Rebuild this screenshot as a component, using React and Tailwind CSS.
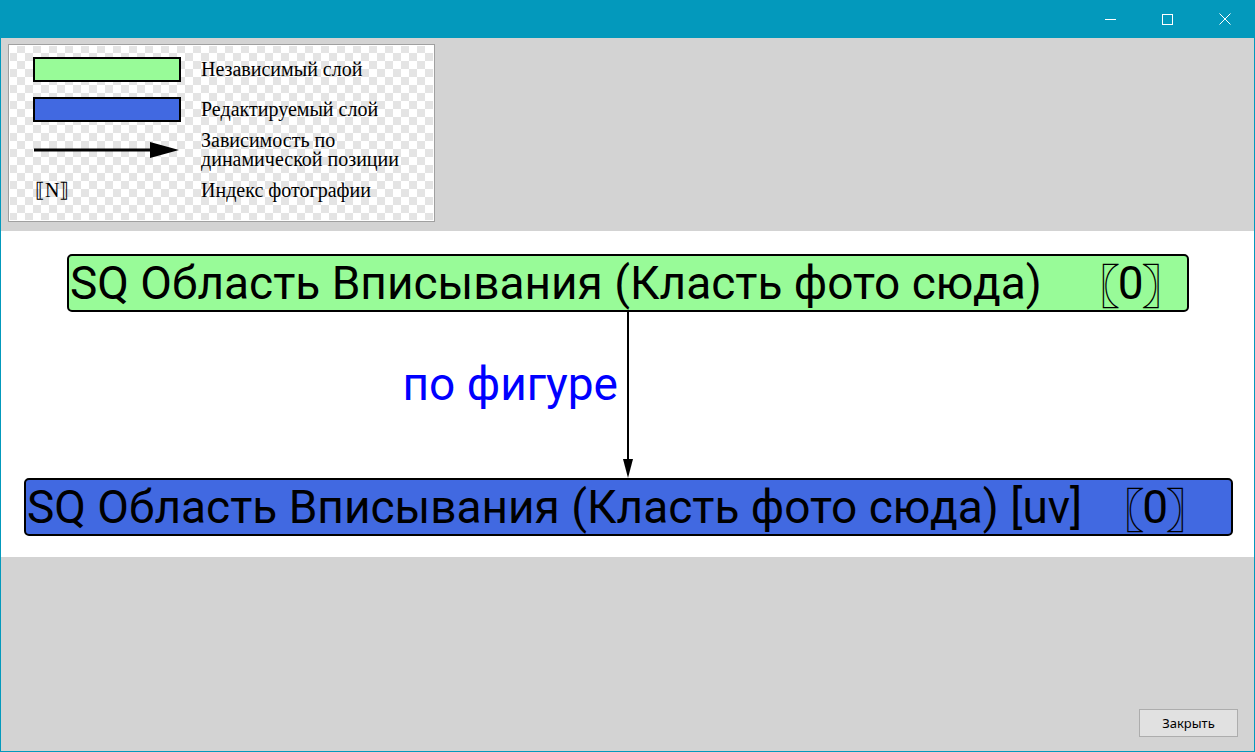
import React from "react";

function Idx({ gap }) {
  return (
    <span className={"inline-flex items-center " + gap}>
      <span className="font-['Noto_Sans_CJK_JP',sans-serif] font-black -mr-[24px] relative -left-[22px]">〖</span>
      <span>0</span>
      <span className="font-['Noto_Sans_CJK_JP',sans-serif] font-black -ml-[24px] relative left-[22px]">〗</span>
    </span>
  );
}

export default function App() {
  return (
    <div className="w-[1255px] h-[752px] bg-[#0399bc] flex flex-col overflow-hidden">
      {/* title bar */}
      <div className="h-[38px] flex items-center justify-end shrink-0 pr-[2px]">
        <div className="w-[57px] h-[38px] flex items-center justify-center">
          <div className="w-[11px] h-px bg-white" />
        </div>
        <div className="w-[57px] h-[38px] flex items-center justify-center">
          <div className="w-[11px] h-[11px] border border-white" />
        </div>
        <div className="w-[57px] h-[38px] flex items-center justify-center">
          <svg width="12" height="12" viewBox="0 0 12 12">
            <path d="M0.5 0.5 L11.5 11.5 M11.5 0.5 L0.5 11.5" stroke="white" strokeWidth="1" />
          </svg>
        </div>
      </div>
      {/* client */}
      <div className="flex-1 mx-px mb-px bg-[#d3d3d3] flex flex-col">
        {/* legend area */}
        <div className="h-[193px] pl-[7px] pt-[6px]">
          <div className="w-[427px] h-[178px] border border-[#a0a0a0] relative bg-white [background-image:repeating-conic-gradient(#e4e4e4_0_25%,#ffffff_0_50%)] [background-size:16px_16px]">
            <div className="absolute inset-0 border border-white" />
            <div className="relative pl-[24px] pt-[12px] flex flex-col font-['Liberation_Serif',serif] text-[20px] text-black leading-[19px]">
              <div className="flex items-center h-[25px]">
                <div className="w-[148px] h-[25px] bg-[#98fb98] border-2 border-black shrink-0" />
                <span className="ml-[20px]">Независимый слой</span>
              </div>
              <div className="flex items-center h-[25px] mt-[15px]">
                <div className="w-[148px] h-[25px] bg-[#4169e1] border-2 border-black shrink-0" />
                <span className="ml-[20px]">Редактируемый слой</span>
              </div>
              <div className="flex items-center h-[36px] mt-[10px]">
                <svg width="148" height="20" viewBox="0 0 148 20" className="shrink-0">
                  <line x1="1" y1="10" x2="120" y2="10" stroke="black" strokeWidth="3" />
                  <polygon points="117,2 146,10 117,18" fill="black" />
                </svg>
                <span className="ml-[20px] whitespace-nowrap">
                  Зависимость по
                  <br />
                  динамической позиции
                </span>
              </div>
              <div className="flex items-center h-[25px] mt-[10px]">
                <span className="w-[148px] pl-[2px] shrink-0">⟦N⟧</span>
                <span className="ml-[20px]">Индекс фотографии</span>
              </div>
            </div>
          </div>
        </div>
        {/* diagram area */}
        <div className="h-[326px] bg-white relative font-['Roboto',sans-serif] text-black">
          <div className="absolute left-[66px] top-[23px] w-[1122px] h-[58px] bg-[#98fb98] border-2 border-black rounded-[5px] flex items-center pl-[1px] text-[46px] leading-none whitespace-nowrap">
            SQ Область Вписывания (Класть фото сюда)
            <Idx gap="ml-[54px]" />
          </div>
          <svg className="absolute left-[616px] top-[81px]" width="22" height="167" viewBox="0 0 22 167">
            <line x1="11" y1="0" x2="11" y2="150" stroke="black" strokeWidth="2" />
            <polygon points="6,147 16,147 11,166" fill="black" />
          </svg>
          <div className="absolute right-[636px] top-[130px] text-[#0000ff] text-[46px] leading-none whitespace-nowrap">
            по фигуре
          </div>
          <div className="absolute left-[23px] top-[247px] w-[1209px] h-[58px] bg-[#4169e1] border-2 border-black rounded-[5px] flex items-center pl-[1px] text-[46px] leading-none whitespace-nowrap">
            SQ Область Вписывания (Класть фото сюда) [uv]
            <Idx gap="ml-[38px]" />
          </div>
        </div>
        {/* bottom */}
        <div className="flex-1 flex items-end justify-end pr-[16px] pb-[14px]">
          <button className="w-[99px] h-[28px] bg-[#e1e1e1] border border-[#adadad] text-[13px] font-['Noto_Sans',sans-serif] text-black leading-none">
            Закрыть
          </button>
        </div>
      </div>
    </div>
  );
}
